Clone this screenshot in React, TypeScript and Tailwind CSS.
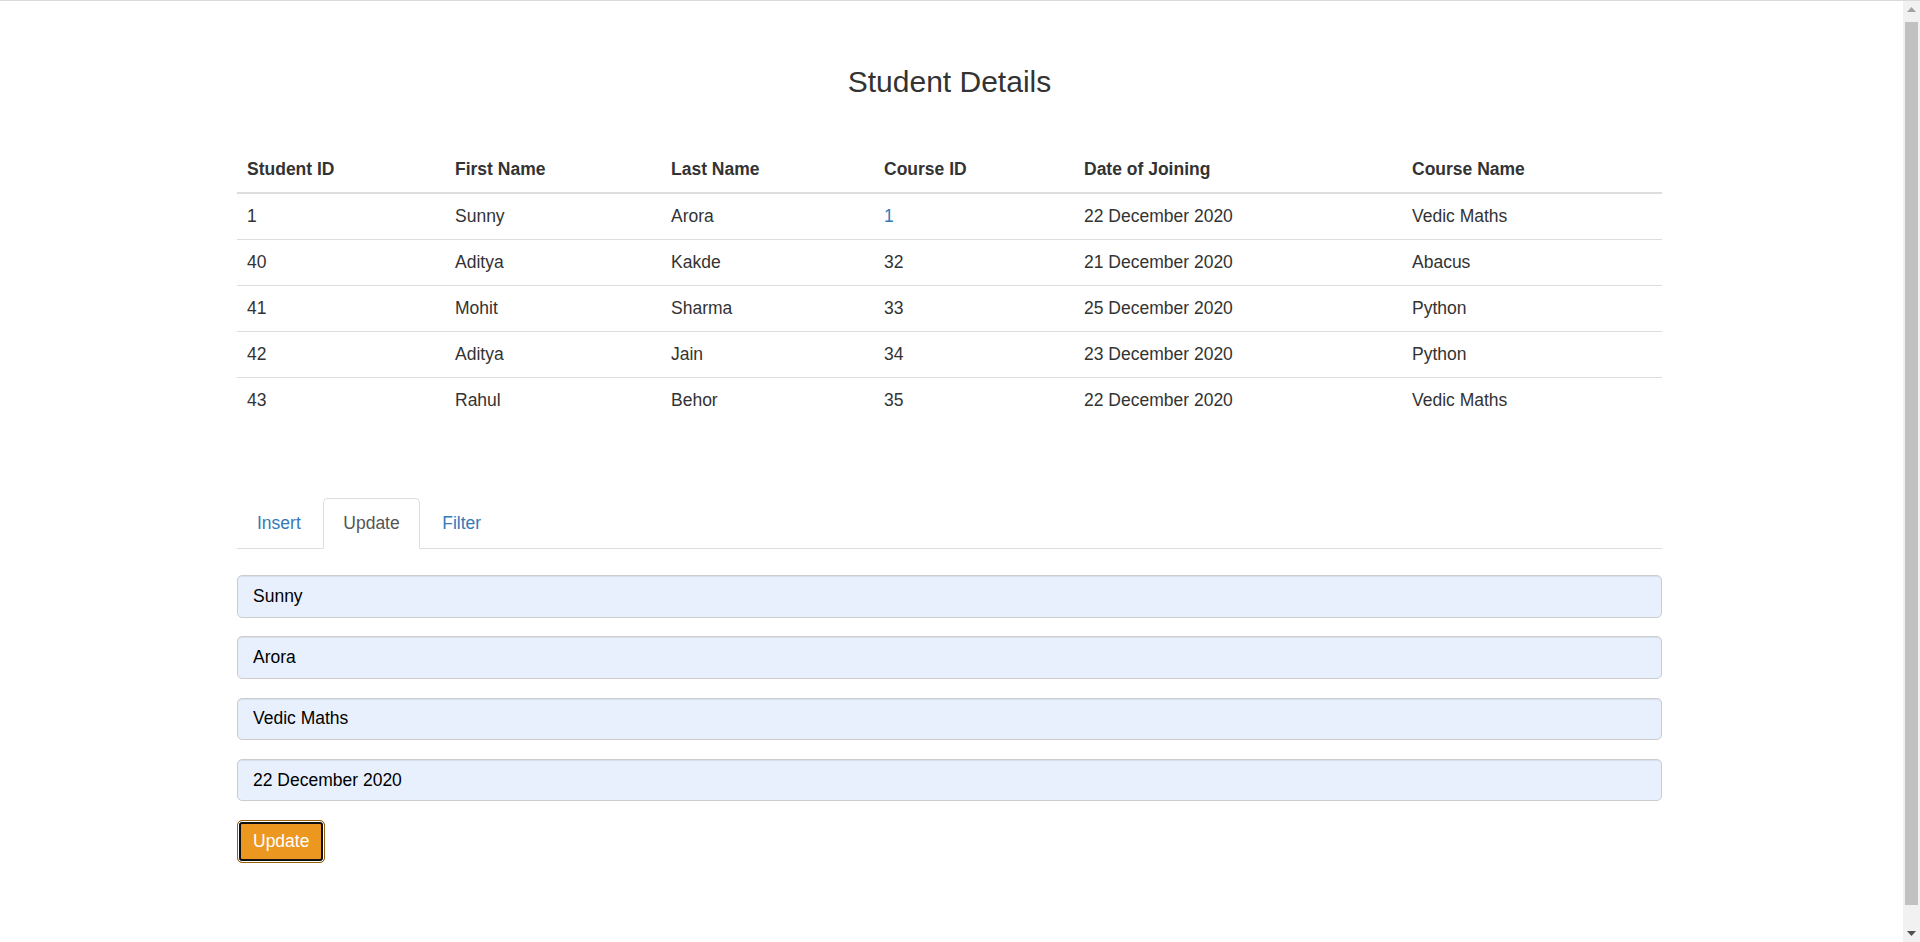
import React from "react";

const rows = [
  ["1", "Sunny", "Arora", "1", "22 December 2020", "Vedic Maths"],
  ["40", "Aditya", "Kakde", "32", "21 December 2020", "Abacus"],
  ["41", "Mohit", "Sharma", "33", "25 December 2020", "Python"],
  ["42", "Aditya", "Jain", "34", "23 December 2020", "Python"],
  ["43", "Rahul", "Behor", "35", "22 December 2020", "Vedic Maths"],
];

const headers = ["Student ID", "First Name", "Last Name", "Course ID", "Date of Joining", "Course Name"];

const fields = ["Sunny", "Arora", "Vedic Maths", "22 December 2020"];

export default function App() {
  return (
    <div className="flex h-screen w-full overflow-hidden border-t border-[#dadada] bg-white font-['Liberation_Sans',Arial,sans-serif] text-[#333]">
      <main className="min-w-0 flex-1">
        <div className="ml-[237px] w-[1425px]">
          <h3 className="mt-[64px] text-center text-[30px] font-normal leading-[33px]">Student Details</h3>

          <table className="mt-[49px] w-full table-fixed border-collapse text-left text-[17.5px] leading-[25px]">
            <colgroup>
              <col className="w-[208px]" />
              <col className="w-[216px]" />
              <col className="w-[213px]" />
              <col className="w-[200px]" />
              <col className="w-[328px]" />
              <col />
            </colgroup>
            <thead>
              <tr>
                {headers.map((h) => (
                  <th key={h} className="border-b-2 border-[#ddd] p-[10px] font-bold">
                    {h}
                  </th>
                ))}
              </tr>
            </thead>
            <tbody>
              {rows.map((r, i) => (
                <tr key={i}>
                  {r.map((c, j) => (
                    <td
                      key={j}
                      className={
                        "border-t border-[#ddd] p-[10px] " +
                        (i === 0 && j === 3 ? "text-[#337ab7]" : "")
                      }
                    >
                      {c}
                    </td>
                  ))}
                </tr>
              ))}
            </tbody>
          </table>

          <ul className="mt-[75px] flex border-b border-[#ddd] text-[17.5px] leading-[25px]">
            <li className="-mb-px mr-[2.5px]">
              <a className="block rounded-t-[5px] border border-transparent px-[19px] py-[12px] text-[#337ab7]">Insert</a>
            </li>
            <li className="-mb-px mr-[2.5px]">
              <a className="block rounded-t-[5px] border border-[#ddd] border-b-white bg-white px-[19px] py-[12px] text-[#555]">Update</a>
            </li>
            <li className="-mb-px mr-[2.5px]">
              <a className="block rounded-t-[5px] border border-transparent px-[19px] py-[12px] text-[#337ab7]">Filter</a>
            </li>
          </ul>

          <form className="mt-[26px]">
            {fields.map((f) => (
              <div key={f} className="mb-[18.75px]">
                <input
                  readOnly
                  defaultValue={f}
                  className="block h-[42.5px] w-full rounded-[5px] border border-[#ccc] bg-[#e8f0fe] px-[15px] text-[17.5px] leading-[25px] text-black shadow-[inset_0_1px_1px_rgba(0,0,0,0.075)] outline-none"
                />
              </div>
            ))}
            <button
              type="button"
              className="h-[42.5px] rounded-[5px] border border-[#985f0d] bg-[#ec971f] px-[15px] text-[17.5px] leading-[25px] text-white shadow-[inset_0_0_0_1px_#fff,inset_0_0_0_3px_#101010]"
            >
              Update
            </button>
          </form>
        </div>
      </main>

      <div className="flex w-[17px] flex-col bg-[#f1f1f1]">
        <div className="flex h-[17px] items-center justify-center">
          <svg width="9" height="5" viewBox="0 0 9 5">
            <polygon points="0,5 4.5,0 9,5" fill="#a3a3a3" />
          </svg>
        </div>
        <div className="mx-[2px] mb-[20px] mt-[4px] flex-1 bg-[#c1c1c1]" />
        <div className="flex h-[17px] items-center justify-center">
          <svg width="9" height="5" viewBox="0 0 9 5">
            <polygon points="0,0 4.5,5 9,0" fill="#505050" />
          </svg>
        </div>
      </div>
    </div>
  );
}
